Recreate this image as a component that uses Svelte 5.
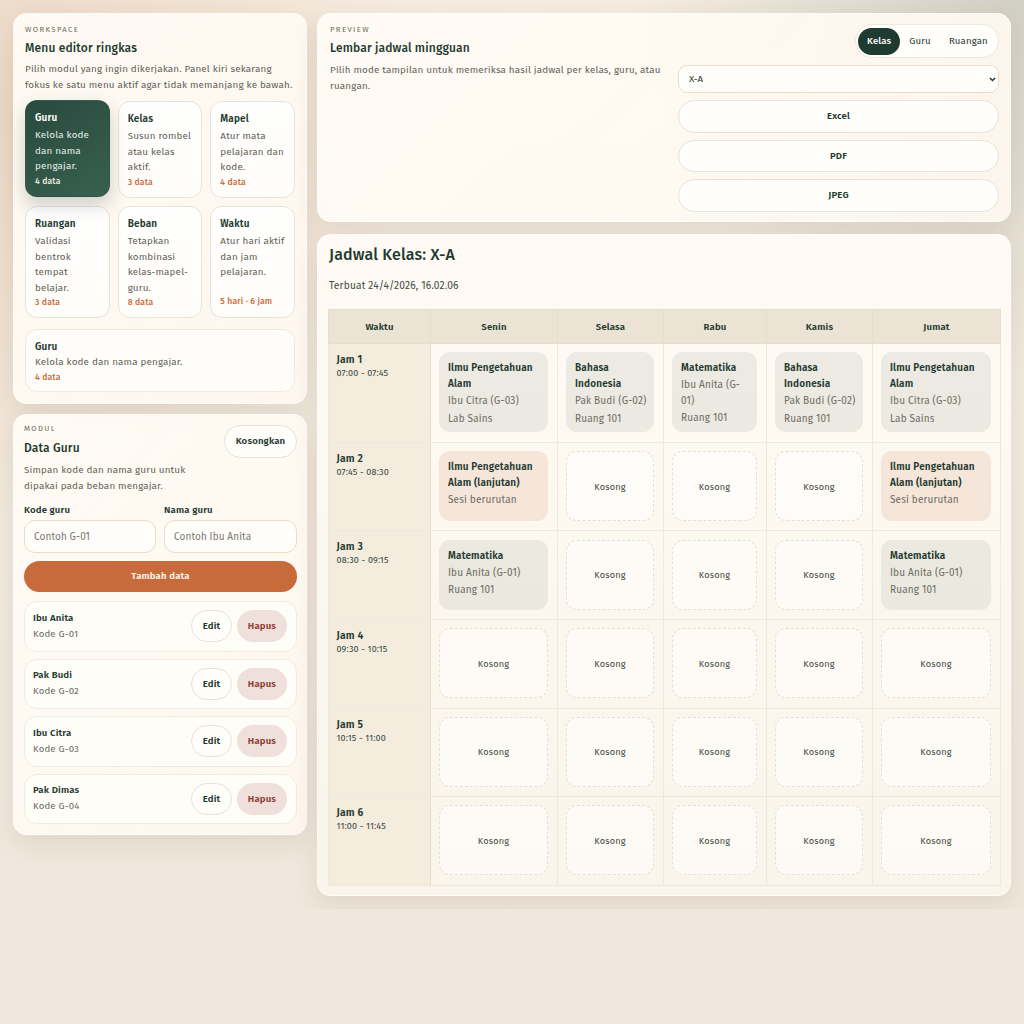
<script>
const menu=[
 {t:"Guru",d:"Kelola kode dan nama pengajar.",c:"4 data",on:true},
 {t:"Kelas",d:"Susun rombel atau kelas aktif.",c:"3 data"},
 {t:"Mapel",d:"Atur mata pelajaran dan kode.",c:"4 data"},
 {t:"Ruangan",d:"Validasi bentrok tempat belajar.",c:"3 data"},
 {t:"Beban",d:"Tetapkan kombinasi kelas-mapel-guru.",c:"8 data"},
 {t:"Waktu",d:"Atur hari aktif dan jam pelajaran.",c:"5 hari · 6 jam"}];
const gurus=[["Ibu Anita","Kode G-01"],["Pak Budi","Kode G-02"],["Ibu Citra","Kode G-03"],["Pak Dimas","Kode G-04"]];
const days=["Senin","Selasa","Rabu","Kamis","Jumat"];
const ipa={s:"Ilmu Pengetahuan Alam",m:["Ibu Citra (G-03)","Lab Sains"]};
const bi={s:"Bahasa Indonesia",m:["Pak Budi (G-02)","Ruang 101"]};
const mat={s:"Matematika",m:["Ibu Anita (G-01)","Ruang 101"]};
const cont={s:"Ilmu Pengetahuan Alam (lanjutan)",m:["Sesi berurutan"],c:true};
const rows=[
 {j:"Jam 1",w:"07:00 - 07:45",c:[ipa,bi,mat,bi,ipa]},
 {j:"Jam 2",w:"07:45 - 08:30",c:[cont,null,null,null,cont]},
 {j:"Jam 3",w:"08:30 - 09:15",c:[mat,null,null,null,mat]},
 {j:"Jam 4",w:"09:30 - 10:15",c:[null,null,null,null,null]},
 {j:"Jam 5",w:"10:15 - 11:00",c:[null,null,null,null,null]},
 {j:"Jam 6",w:"11:00 - 11:45",c:[null,null,null,null,null]}];
</script>

<div class="page">
 <div class="shell">
  <aside class="side">
   <section class="panel menu-panel">
    <div class="eyebrow">WORKSPACE</div>
    <h2>Menu editor ringkas</h2>
    <p class="lead">Pilih modul yang ingin dikerjakan. Panel kiri sekarang fokus ke satu menu aktif agar tidak memanjang ke bawah.</p>
    <div class="menu-grid">
     {#each menu as m}
      <button class="mcard" class:on={m.on}>
       <strong>{m.t}</strong>
       <span class="d">{m.d}</span>
       <span class="c">{m.c}</span>
      </button>
     {/each}
    </div>
    <div class="summary">
     <strong>Guru</strong>
     <span class="d">Kelola kode dan nama pengajar.</span>
     <span class="c">4 data</span>
    </div>
   </section>

   <section class="panel data-panel">
    <div class="data-head">
     <div>
      <div class="eyebrow">MODUL</div>
      <h2>Data Guru</h2>
     </div>
     <button class="pill kos">Kosongkan</button>
    </div>
    <p class="lead narrow">Simpan kode dan nama guru untuk dipakai pada beban mengajar.</p>
    <div class="form">
     <label><span>Kode guru</span><input placeholder="Contoh G-01" /></label>
     <label><span>Nama guru</span><input placeholder="Contoh Ibu Anita" /></label>
    </div>
    <button class="add">Tambah data</button>
    <div class="list">
     {#each gurus as g}
      <div class="item">
       <div class="who"><strong>{g[0]}</strong><span>{g[1]}</span></div>
       <button class="pill edit">Edit</button>
       <button class="hapus">Hapus</button>
      </div>
     {/each}
    </div>
   </section>
  </aside>

  <main class="main">
   <section class="panel prev">
    <div class="prev-l">
     <div class="eyebrow">PREVIEW</div>
     <h2>Lembar jadwal mingguan</h2>
     <p class="lead">Pilih mode tampilan untuk memeriksa hasil jadwal per kelas, guru, atau ruangan.</p>
    </div>
    <div class="prev-r">
     <div class="seg">
      <span class="sel">Kelas</span><span>Guru</span><span>Ruangan</span>
     </div>
     <select><option>X-A</option></select>
     <button class="pill wide">Excel</button>
     <button class="pill wide">PDF</button>
     <button class="pill wide">JPEG</button>
    </div>
   </section>

   <section class="panel sched">
    <h1>Jadwal Kelas: X-A</h1>
    <p class="made">Terbuat 24/4/2026, 16.02.06</p>
    <table>
     <colgroup>
      <col class="c0" /><col class="c1" /><col class="c2" /><col class="c3" /><col class="c2" /><col class="c5" />
     </colgroup>
     <thead>
      <tr><th>Waktu</th>{#each days as d}<th>{d}</th>{/each}</tr>
     </thead>
     <tbody>
      {#each rows as r}
       <tr>
        <td class="time"><strong>{r.j}</strong><span>{r.w}</span></td>
        {#each r.c as c}
         <td>
          {#if c}
           <div class="slot" class:cont={c.c}>
            <strong>{c.s}</strong>
            {#each c.m as x}<span>{x}</span>{/each}
           </div>
          {:else}
           <div class="empty">Kosong</div>
          {/if}
         </td>
        {/each}
       </tr>
      {/each}
     </tbody>
    </table>
   </section>
  </main>
 </div>
</div>

<style>
:global(body){margin:0;background:#f0e8dc;font-family:"Fira Sans","Ubuntu","Noto Sans",sans-serif;letter-spacing:.01em;color:#1f3a31}
.page{background:radial-gradient(circle at 0 12%,rgba(200,107,60,.16),transparent 32%),radial-gradient(circle at 100% 0,rgba(31,58,49,.16),transparent 28%),linear-gradient(180deg,#f4ecdf,#f0e8dc)}
.shell{display:grid;grid-template-columns:294px 694px;gap:10px;padding:13px;align-items:start}
.side{display:flex;flex-direction:column;gap:10px}
.main{display:flex;flex-direction:column;gap:12px}
.panel{background:linear-gradient(135deg,rgba(255,252,246,.94),rgba(255,248,240,.9));border-radius:14px;box-shadow:0 10px 26px rgba(80,60,40,.1);border:1px solid rgba(255,255,255,.5);box-sizing:border-box}
.menu-panel{padding:11px 11px 11px 11px;height:391px}
.data-panel{padding:9px 9px 9px 10px;height:421px}
.eyebrow{font-size:7.7px;letter-spacing:.18em;color:#6d6a60;line-height:10px}
h2{font-size:12px;font-weight:500;margin:5px 0 0;line-height:16px;color:#1f3a31}
.lead{font-size:9.85px;line-height:15.6px;color:#5f6258;margin:6px 0 0}
.narrow{max-width:180px;margin-top:5px}
.menu-grid{display:grid;grid-template-columns:repeat(3,1fr);column-gap:8px;row-gap:8.5px;margin-top:8px;grid-template-rows:96.5px 112px}
.mcard{all:unset;box-sizing:border-box;background:linear-gradient(160deg,#fff,#fffdf9);border:1px solid #e7e4dc;border-radius:12px;padding:9px 9.5px 9px 9px;display:flex;flex-direction:column;font-family:inherit}
.mcard strong,.summary strong{font-size:10px;font-weight:600;line-height:16px;color:#1f3a31}
.d{font-size:9.85px;line-height:15.5px;color:#5f6258;margin-top:2px}
.c{font-size:8.6px;line-height:12px;color:#c86b3c;margin-top:auto;font-weight:500;padding-bottom:1px}
.mcard.on{background:linear-gradient(145deg,#294a3f,#38604f);border-color:transparent;transform:translateY(-1px);box-shadow:0 8px 18px rgba(31,58,49,.22)}
.mcard.on strong{color:#fff}.mcard.on .d{color:#e7eee9}.mcard.on .c{color:#f2ece2}
.summary{margin-top:11px;background:#fffdf9;border:1px solid #efebe3;border-radius:12px;padding:9px;display:flex;flex-direction:column;height:63px;box-sizing:border-box}
.summary .d{margin-top:0}
.data-head{display:flex;justify-content:space-between;align-items:flex-start}
.data-head h2{margin-top:6px}
.pill{all:unset;box-sizing:border-box;text-align:center;background:#fffefb;border:1px solid #e5e3da;border-radius:999px;font-size:9.6px;font-weight:600;color:#1f3a31;font-family:inherit}
.kos{width:73px;height:33px;line-height:31px;margin-top:1px}
.form{display:grid;grid-template-columns:132px 1fr;gap:8px;margin-top:9px}
label span{display:block;font-size:9.6px;font-weight:600;line-height:14px;color:#1f3a31;margin-bottom:3px}
input{box-sizing:border-box;width:100%;height:33px;border:1px solid #eadcc8;border-radius:11px;background:#fffefb;padding:0 9px;font:10px "Fira Sans","Ubuntu","Noto Sans",sans-serif;letter-spacing:.01em;outline:none}
input::placeholder{color:#77776e}
.add{all:unset;display:block;box-sizing:border-box;width:100%;height:31px;margin-top:8px;border-radius:999px;background:#c86b3c;color:#fff6ec;text-align:center;line-height:31px;font-size:9.6px;font-weight:600;font-family:inherit}
.list{display:flex;flex-direction:column;gap:7px;margin-top:9px}
.item{display:flex;align-items:center;box-sizing:border-box;height:50.5px;padding:0 9px 0 8px;background:#fffdf8;border:1px solid #f1ece3;border-radius:13px}
.who{flex:1;display:flex;flex-direction:column}
.who strong{font-size:9.6px;font-weight:600;line-height:16px;color:#1f3a31}
.who span{font-size:9.6px;line-height:17px;color:#6c6c62}
.edit{width:41px;height:32px;line-height:30px}
.hapus{all:unset;box-sizing:border-box;width:50px;height:32px;line-height:32px;margin-left:5px;border-radius:999px;background:#f0e0dc;color:#8f3a32;font-size:9.6px;font-weight:600;text-align:center;font-family:inherit}
.prev{display:flex;height:209px;padding:10px 11px 9px 12px;justify-content:space-between}
.prev-l{width:335px;padding-top:1px}
.prev-l .lead{margin-top:7px}
.prev-r{width:321px;display:flex;flex-direction:column;align-items:stretch;gap:7px}
.seg{align-self:flex-end;width:144px;height:34px;box-sizing:border-box;border:1px solid #ece9e0;border-radius:999px;background:#fffefb;display:flex;align-items:center;padding:0 2px;font-size:9.6px;color:#1f3a31}
.seg span{padding:0 9px;line-height:27px;border-radius:999px}
.seg .sel{background:#1f3a31;color:#fff;font-weight:500}
select{box-sizing:border-box;height:28px;border:1px solid #eadcc8;border-radius:9px;padding:0 10px;appearance:none;background:#fffefb url("data:image/svg+xml,%3Csvg xmlns='http://www.w3.org/2000/svg' width='7' height='5' viewBox='0 0 7 5'%3E%3Cpath d='M1 1l2.5 2.5L6 1' fill='none' stroke='%231f3a31' stroke-width='1.5'/%3E%3C/svg%3E") no-repeat right 2.5px center;font:9.6px "Fira Sans","Ubuntu","Noto Sans",sans-serif;color:#1f3a31}
.wide{height:32.5px;line-height:30.5px;display:block}
.sched{height:662px;padding:0 9px 0 10px;background:linear-gradient(180deg,#fffaf4,#faf5ea)}
h1{font-size:16px;font-weight:500;margin:10px 0 0 1px;line-height:20px;color:#1f3a31}
.made{font-size:10.2px;margin:14px 0 0 1px;line-height:14px;color:#3c4a42}
table{border-collapse:collapse;table-layout:fixed;width:672px;margin:16px 0 0 0}
.c0{width:102px}.c1{width:127px}.c2{width:106px}.c3{width:103px}.c5{width:128px}
th{background:#ebe3d4;height:33px;font-size:9.6px;font-weight:600;color:#1f3a31;border:1px solid #e6decf;padding:0}
td{border:1px solid #efe9dd;padding:8.3px 9px 9.3px 8px;vertical-align:top}
.time{background:#f4ecdd;padding:9px 8px 8px 7.5px;border-right-color:#e6decf}
.time strong{display:block;font-size:10.4px;font-weight:600;line-height:14px}
.time span{display:block;font-size:9px;line-height:12px;color:#33473e}
.slot{box-sizing:border-box;min-height:70px;border-radius:11px;background:rgba(31,58,49,.08);padding:8px 7px 5px 9px}
.slot.cont{background:#f6e6da}
.slot strong{display:block;font-size:10px;font-weight:600;line-height:16px;color:#1f3a31}
.slot span{display:block;font-size:10px;line-height:15.6px;margin-top:2px;color:#6c6c62}
.empty{box-sizing:border-box;height:70px;display:flex;align-items:center;justify-content:center;border:1px dashed #e6e1d7;border-radius:11px;background:rgba(255,255,255,.5);font-size:9.2px;color:#3f4a43}
</style>
